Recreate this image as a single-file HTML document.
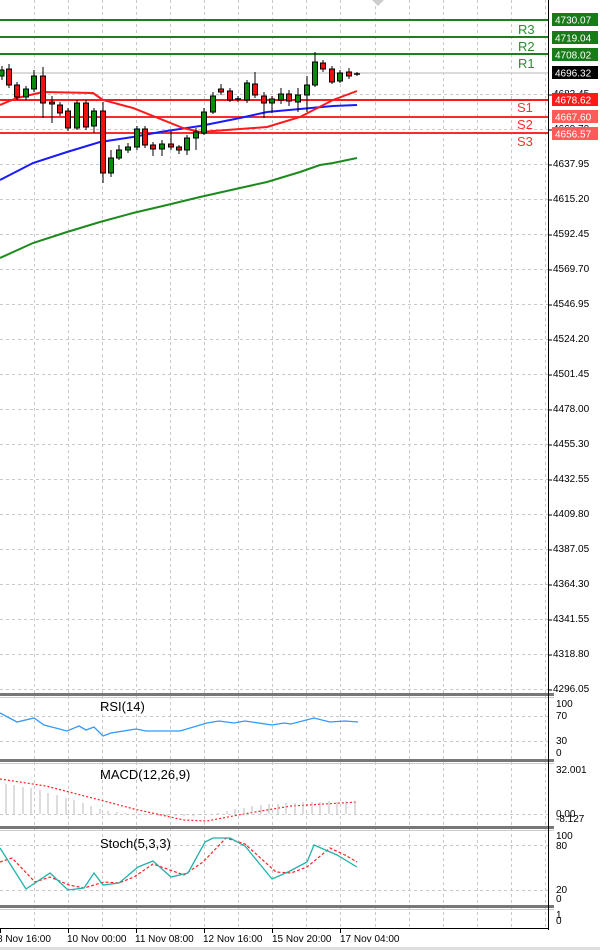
<!DOCTYPE html>
<html><head><meta charset="utf-8"><style>
html,body{margin:0;padding:0;background:#fff;width:600px;height:950px;overflow:hidden}
svg{display:block}
text{font-family:"Liberation Sans",sans-serif}
</style></head><body>
<svg width="600" height="950" viewBox="0 0 600 950" xmlns="http://www.w3.org/2000/svg">
<rect width="600" height="950" fill="#fff"/>
<g stroke="#c8c8c8" stroke-width="1" stroke-dasharray="3,3" fill="none">
<path d="M34.5 0V928M68.5 0V928M102.5 0V928M136.5 0V928M170.5 0V928M204.5 0V928M238.5 0V928M272.5 0V928M306.5 0V928M340.5 0V928M375.5 0V928M409.5 0V928M443.5 0V928M477.5 0V928M511.5 0V928M545.5 0V928"/>
<path d="M0 94.5H548M0 129.5H548M0 164.5H548M0 199.5H548M0 234.5H548M0 269.5H548M0 304.5H548M0 339.5H548M0 374.5H548M0 409.5H548M0 444.5H548M0 479.5H548M0 514.5H548M0 549.5H548M0 584.5H548M0 619.5H548M0 654.5H548M0 689.5H548"/>
<path d="M0 716.5H548M0 741.5H548M0 814.5H548M0 845.5H548M0 890.5H548"/>
</g>
<!-- levels -->
<line x1="0" y1="73" x2="548" y2="73" stroke="#cfcfcf" stroke-width="1.5"/>
<g stroke-width="2">
<line x1="0" y1="20" x2="548" y2="20" stroke="#1f7f1f"/>
<line x1="0" y1="37" x2="548" y2="37" stroke="#1f7f1f"/>
<line x1="0" y1="54" x2="548" y2="54" stroke="#1f7f1f"/>
<line x1="0" y1="100" x2="548" y2="100" stroke="#ff1a1a"/>
<line x1="0" y1="117" x2="548" y2="117" stroke="#ff2a2a"/>
<line x1="0" y1="133" x2="548" y2="133" stroke="#ff2a2a"/>
</g>
<g font-size="13" fill="#2e8b2e"><text x="518" y="34">R3</text><text x="518" y="51">R2</text><text x="518" y="68">R1</text></g>
<g font-size="13" fill="#ff3030"><text x="517" y="112">S1</text><text x="517" y="129">S2</text><text x="517" y="146">S3</text></g>
<!-- MAs -->
<polyline fill="none" stroke="#1d8a1d" stroke-width="2" points="0,258 33,243 67,232 100,222 133,213 167,205 200,197 240,188 267,182 300,172 320,165 333,163 357,158"/>
<polyline fill="none" stroke="#1a1aff" stroke-width="2" points="0,180 33,163 67,152 100,142 133,137 160,132 200,126 240,118 267,112 300,109 333,106 357,105"/>
<polyline fill="none" stroke="#ff1a1a" stroke-width="2" points="0,105 17,98 43,92 93,93 103,100 133,108 183,128 200,132 267,127 300,117 333,100 357,91"/>
<!-- candles -->
<g stroke="#000" stroke-width="1">
<path d="M2 66V80M9 64V88M17 82V100M26 86V100M34 70V92M43 67V118M52 96V123M60 102V116M68 108V131M77 100V130M86 100V130M94 108V133M103 102V183M111 150V177M119 145V160M128 143V153M137 126V150M145 126V148M153 142V156M162 140V156M171 131V150M179 145V154M187 135V155M196 128V150M204 108V135M213 92V114M221 84V95M230 88V102M238 96V102M247 80V103M255 72V98M264 92V118M272 96V113M281 88V104M289 90V106M298 88V112M307 76V112M315 52V87M323 60V72M332 66V84M340 70V83M349 68V79M357 72V76"/>
</g>
<g stroke="#000" stroke-width="1" fill="#0a8a0a">
<rect x="-1" y="70" width="5" height="6"/><rect x="23.5" y="89" width="5" height="8"/><rect x="31.5" y="76" width="5" height="13"/>
<rect x="74.5" y="103" width="5" height="25"/><rect x="91.5" y="111" width="5" height="15"/><rect x="108.5" y="158" width="5" height="15"/>
<rect x="116.5" y="150" width="5" height="8"/><rect x="125.5" y="147" width="5" height="3"/><rect x="134.5" y="129" width="5" height="18"/>
<rect x="159.5" y="144" width="5" height="5"/><rect x="184.5" y="138" width="5" height="12"/><rect x="193.5" y="132" width="5" height="6"/>
<rect x="201.5" y="112" width="5" height="21"/><rect x="210.5" y="96" width="5" height="16"/><rect x="244.5" y="83" width="5" height="17"/>
<rect x="269.5" y="99" width="5" height="4"/><rect x="278.5" y="94" width="5" height="6"/><rect x="295.5" y="95" width="5" height="7"/>
<rect x="304.5" y="85" width="5" height="10"/><rect x="312.5" y="62" width="5" height="23"/><rect x="337.5" y="73" width="5" height="8"/>
</g>
<g stroke="#000" stroke-width="1" fill="#ee1111">
<rect x="6.5" y="69" width="5" height="16"/><rect x="14.5" y="85" width="5" height="12"/><rect x="40.5" y="76" width="5" height="27"/>
<rect x="49.5" y="102" width="5" height="2"/><rect x="57.5" y="105" width="5" height="8"/><rect x="65.5" y="111" width="5" height="17"/>
<rect x="83.5" y="103" width="5" height="24"/><rect x="100.5" y="111" width="5" height="62"/><rect x="142.5" y="129" width="5" height="16"/>
<rect x="150.5" y="145" width="5" height="4"/><rect x="168.5" y="144" width="5" height="3"/><rect x="176.5" y="147" width="5" height="3"/>
<rect x="218.5" y="89" width="5" height="3"/><rect x="227.5" y="91" width="5" height="9"/><rect x="252.5" y="84" width="5" height="11"/>
<rect x="261.5" y="96" width="5" height="7"/><rect x="286.5" y="94" width="5" height="7"/><rect x="320.5" y="63" width="5" height="6"/>
<rect x="329.5" y="69" width="5" height="13"/><rect x="346.5" y="72" width="5" height="4"/>
</g>
<path d="M235 99H241M354 74H360" stroke="#000" stroke-width="1.5"/>
<!-- panel separators -->
<g fill="#777">
<rect x="0" y="693" width="554" height="3"/><rect x="0" y="759" width="554" height="3"/>
<rect x="0" y="826" width="554" height="3"/><rect x="0" y="905" width="554" height="3"/>
</g>
<g stroke="#ccc"><line x1="0" y1="697.5" x2="554" y2="697.5"/><line x1="0" y1="763.5" x2="554" y2="763.5"/><line x1="0" y1="830.5" x2="554" y2="830.5"/><line x1="0" y1="909.5" x2="554" y2="909.5"/></g>
<line x1="548.5" y1="0" x2="548.5" y2="930" stroke="#000"/>
<line x1="0" y1="928.5" x2="549" y2="928.5" stroke="#000"/>
<!-- RSI -->
<polyline fill="none" stroke="#3399ff" stroke-width="1.3" points="0,713 17,722 34,718 44,725 67,731 79,726 86,730 94,727 103,736 111,733 136,729 146,731 180,731 207,723 219,721 234,723 245,721 272,725 284,723 291,724 314,718 330,722 345,721 358,722"/>
<polyline fill="none" stroke="#ff2020" stroke-width="1.2" stroke-dasharray="2,2" points="0,779 46,786 100,800 134,809 184,820 207,821 249,813 291,806 358,802"/>
<g stroke="#bbb" stroke-width="1">
<path d="M6 814V784M14 814V785M23 814V787M31 814V788M40 814V790M48 814V793M57 814V795M66 814V798M74 814V800M83 814V803M91 814V806M100 814V809M108 814V811M117 814V812M125 814V813M150 814V815M159 814V816M167 814V816M176 814V816M184 814V816M193 814V816M201 814V815M218 814V813M227 814V811M235 814V809M244 814V808M252 814V806M261 814V805M269 814V804M278 814V804M286 814V803M295 814V803M303 814V802M312 814V802M320 814V802M329 814V801M337 814V802M346 814V801M355 814V801"/>
</g>
<polyline fill="none" stroke="#ff2020" stroke-width="1.2" stroke-dasharray="3,2" points="0,862 12,858 35,882 50,877 69,885 84,888 104,882 119,883 134,877 153,864 184,875 203,862 226,838 245,844 276,872 291,873 307,867 330,848 345,855 357,862"/>
<polyline fill="none" stroke="#20b2aa" stroke-width="1.3" points="0,848 26,889 50,873 68,890 84,888 94,873 103,885 119,883 138,867 153,861 171,877 188,873 205,842 213,838 230,838 245,846 272,879 288,872 307,862 314,845 337,855 357,867"/>
<g font-size="13" fill="#000"><text x="100" y="711">RSI(14)</text><text x="100" y="779">MACD(12,26,9)</text><text x="100" y="848">Stoch(5,3,3)</text></g>
<!-- price labels -->
<g font-size="10" fill="#000">
<text x="553" y="97">4683.45</text><text x="553" y="132">4660.70</text><text x="553" y="167">4637.95</text><text x="553" y="202">4615.20</text>
<text x="553" y="237">4592.45</text><text x="553" y="272">4569.70</text><text x="553" y="307">4546.95</text><text x="553" y="342">4524.20</text>
<text x="553" y="377">4501.45</text><text x="553" y="412">4478.00</text><text x="553" y="447">4455.30</text><text x="553" y="482">4432.55</text>
<text x="553" y="517">4409.80</text><text x="553" y="552">4387.05</text><text x="553" y="587">4364.30</text><text x="553" y="622">4341.55</text>
<text x="553" y="657">4318.80</text><text x="553" y="692">4296.05</text>
<text x="556" y="707">100</text><text x="556" y="719">70</text><text x="556" y="744">30</text><text x="556" y="756">0</text>
<text x="556" y="773">32.001</text><text x="556" y="817">0.00</text><text x="556" y="822">-8.127</text>
<text x="556" y="839">100</text><text x="556" y="849">80</text><text x="556" y="893">20</text><text x="556" y="902">0</text>
<text x="556" y="918">1</text><text x="556" y="924">0</text>
</g>
<g stroke="#000"><path d="M549 95H552M549 130H552M549 165H552M549 200H552M549 235H552M549 270H552M549 305H552M549 340H552M549 375H552M549 410H552M549 445H552M549 480H552M549 515H552M549 550H552M549 585H552M549 620H552M549 655H552M549 690H552"/></g>
<rect x="552" y="13" width="46" height="13" fill="#1a7a1a"/><text x="555" y="23.5" font-size="10" fill="#fff">4730.07</text>
<rect x="552" y="31" width="46" height="13" fill="#1a7a1a"/><text x="555" y="41.5" font-size="10" fill="#fff">4719.04</text>
<rect x="552" y="48" width="46" height="13" fill="#1a7a1a"/><text x="555" y="58.5" font-size="10" fill="#fff">4708.02</text>
<rect x="552" y="66" width="46" height="13" fill="#000"/><text x="555" y="76.5" font-size="10" fill="#fff">4696.32</text>
<rect x="552" y="93" width="46" height="13" fill="#ff1a1a"/><text x="555" y="103.5" font-size="10" fill="#fff">4678.62</text>
<rect x="552" y="110" width="46" height="13" fill="#ff5a5a"/><text x="555" y="120.5" font-size="10" fill="#fff">4667.60</text>
<rect x="552" y="127" width="46" height="13" fill="#ff5a5a"/><text x="555" y="137.5" font-size="10" fill="#fff">4656.57</text>
<path d="M372 0L378 6L384 0Z" fill="#ccc"/>
<!-- time axis -->
<g stroke="#000"><path d="M0.5 928V933M68.5 928V933M136.5 928V933M204.5 928V933M272.5 928V933M340.5 928V933"/></g>
<g font-size="10" fill="#000"><text x="-3" y="942">8 Nov 16:00</text><text x="67" y="942">10 Nov 00:00</text><text x="135" y="942">11 Nov 08:00</text><text x="203" y="942">12 Nov 16:00</text><text x="272" y="942">15 Nov 20:00</text><text x="340" y="942">17 Nov 04:00</text></g>
<line x1="0" y1="948.5" x2="600" y2="948.5" stroke="#ddd" stroke-width="3"/>
</svg>
</body></html>
